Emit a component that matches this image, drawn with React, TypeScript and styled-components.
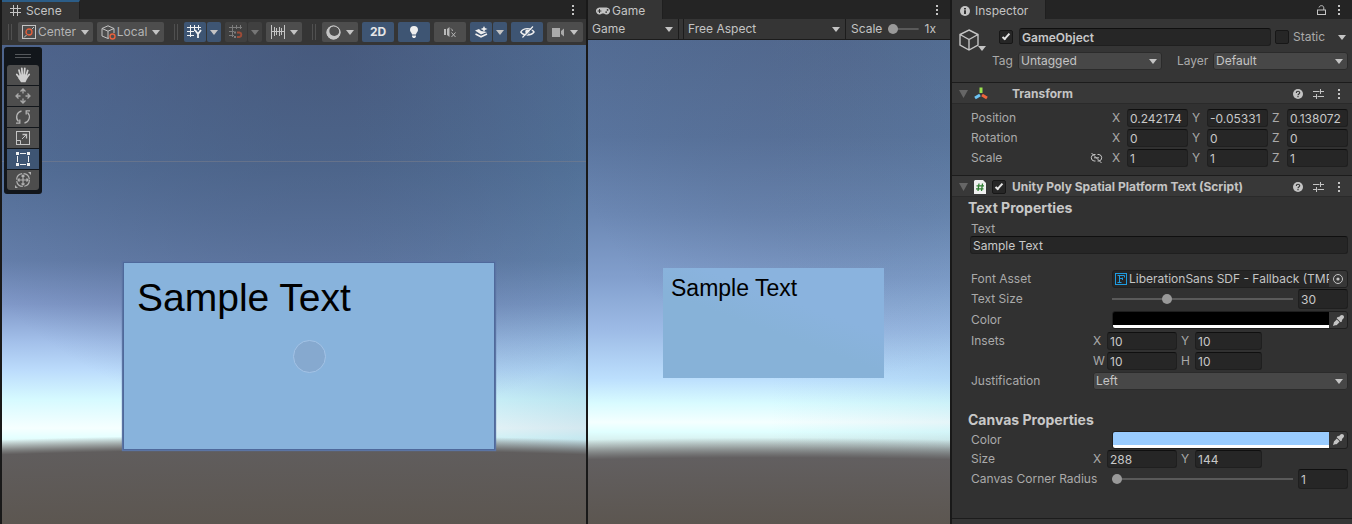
import React, { useId } from "react";
import styled, { createGlobalStyle, css } from "styled-components";
import { FaEyeDropper, FaGamepad } from "react-icons/fa";

const c = {
  gutter: "#191919",
  strip: "#242424",
  panel: "#353535",
  body: "#313131",
  header: "#383838",
  line: "#1c1c1c",
  field: "#262626",
  button: "#4d4d4d",
  select: "#474747",
  active: "#3e5573",
  text: "#c4c4c4",
  label: "#aaaaaa",
  icon: "#c4c4c4",
  orange: "#e8603c",
};

const Global = createGlobalStyle`
  *, *::before, *::after { box-sizing: border-box; }
  body { margin: 0; background: ${c.gutter}; color: ${c.text}; font: 12px/16px Inter, "Liberation Sans", sans-serif; }
  button, input, select { font: inherit; color: inherit; margin: 0; }
  button { border: 0; padding: 0; background: none; }
  svg { display: block; flex: none; }
`;

/* ---------- shell ---------- */

const Editor = styled.main`
  display: grid;
  grid-template-columns: minmax(0, 584fr) minmax(0, 362fr) 400px;
  gap: 2px;
  padding-left: 2px;
  min-height: 100vh;
`;

const Panel = styled.section`
  display: flex;
  flex-direction: column;
  min-width: 0;
  background: ${c.panel};
`;

const TabStrip = styled.header`
  display: flex;
  align-items: stretch;
  height: 19px;
  background: ${c.strip};
`;

const Tab = styled.div<{ $focused?: boolean; $gap: number }>`
  display: flex;
  align-items: center;
  gap: ${(p) => p.$gap}px;
  padding: ${(p) => (p.$focused ? 0 : 2)}px 17px 0 8px;
  background: ${c.panel};
  border-top: ${(p) => (p.$focused ? `2px solid #2c5d87` : "0")};
  border-right: 1px solid #1f1f1f;
`;

const StripActions = styled.div`
  display: flex;
  align-items: center;
  gap: 8px;
  margin-left: auto;
  padding-right: 8px;
`;

const IconButton = styled.button`
  display: flex;
  align-items: center;
  justify-content: center;
`;

/* ---------- icons ---------- */

const Kebab = () => (
  <svg width="10" height="12" viewBox="0 0 10 12" fill={c.icon}>
    <rect x="4" y="1" width="2" height="2" />
    <rect x="4" y="5" width="2" height="2" />
    <rect x="4" y="9" width="2" height="2" />
  </svg>
);

const Caret = ({ color = c.icon }: { color?: string }) => (
  <svg width="8" height="5" viewBox="0 0 8 5" fill={color}>
    <path d="M0 0H8L4 5Z" />
  </svg>
);

const FoldCaret = () => (
  <svg width="9" height="8" viewBox="0 0 9 8" fill="#666666">
    <path d="M0 0H9L4.500 8Z" />
  </svg>
);

const SceneIcon = () => (
  <svg width="11" height="11" viewBox="0 0 11 11" stroke={c.icon} fill="none">
    <path d="M3.500 0V11M7.500 0V11M0 3.500H11M0 7.500H11" />
  </svg>
);

const InfoIcon = () => (
  <svg width="10" height="10" viewBox="0 0 10 10">
    <circle cx="5" cy="5" r="5" fill={c.icon} />
    <path d="M4 2h2v1.500H4zM4 4.200h2V8H4z" fill={c.panel} />
  </svg>
);

const LockIcon = () => (
  <svg width="9" height="10" viewBox="0 0 9 10" fill="none" stroke={c.icon}>
    <rect x="0.500" y="5" width="8" height="4.500" />
    <path d="M2 2.500C2.500 0 6.800 0 6.800 2.800V5" />
  </svg>
);

const PivotIcon = () => (
  <svg width="15" height="15" viewBox="0 0 15 15" fill="none" stroke={c.icon}>
    <rect x="0.500" y="0.500" width="13" height="13" />
    <path d="M2 12.500L4.500 10M9.500 4.500L12 2" />
    <circle cx="7" cy="7" r="3" stroke={c.orange} strokeWidth="1.300" />
  </svg>
);

const LocalIcon = () => (
  <svg width="15" height="15" viewBox="0 0 15 15" fill="none" stroke={c.icon}>
    <path d="M8 13L7 13.500L1 11V3.500L7 0.800L13 3.500V8M1 3.500L7 6.200L13 3.500M7 6.200V13" />
    <circle cx="11.500" cy="11.500" r="2.500" stroke={c.orange} strokeWidth="1.400" />
  </svg>
);

const GridAxisIcon = () => (
  <svg width="16" height="14" viewBox="0 0 16 14" fill="none" stroke="#f2f2f2">
    <path d="M3.500 0V12M7.500 0V6M11.500 0V5M0 2.500H14M0 6.500H7M0 10.500H7" />
    <path d="M8 5L11 9L14 5M11 9V13" strokeWidth="1.800" />
  </svg>
);

const SnapIcon = () => (
  <svg width="15" height="14" viewBox="0 0 15 14" fill="none" stroke="#7c7c7c">
    <path d="M3.500 0V12M7.500 0V4M11.500 0V4M0 2.500H13M0 6.500H5M0 10.500H5" />
    <path d="M8 7.500H10.500A2.300 2.300 0 0 1 10.500 12H8" stroke="#9c4c38" strokeWidth="2" />
    <path d="M6 6.500v2M6 11v2" strokeWidth="2" />
  </svg>
);

const RulerIcon = () => (
  <svg width="14" height="14" viewBox="0 0 14 14" fill="none" stroke={c.icon}>
    <path d="M0.500 0V14M13.500 0V14M3.500 2V11M5.500 3V10M8.500 2V11M10.500 3V10M1 6.500H13" />
  </svg>
);

const ShadingIcon = () => (
  <svg width="15" height="15" viewBox="0 0 15 15">
    <circle cx="7.500" cy="7.500" r="7" fill={c.icon} />
    <circle cx="8.300" cy="6" r="5" fill="#4d4d4d" />
    <circle cx="7.500" cy="7.500" r="6.500" fill="none" stroke={c.icon} />
  </svg>
);

const BulbIcon = () => (
  <svg width="10" height="12" viewBox="0 0 10 12" fill="#eeeeee">
    <path d="M5 0a4 4 0 0 1 4 4c0 2-1.800 2.800-2 4.500H3C2.800 6.800 1 6 1 4a4 4 0 0 1 4-4zM3 9.500h4v1L6 12H4l-1-1.500z" />
  </svg>
);

const MuteIcon = () => (
  <svg width="12" height="11" viewBox="0 0 12 11" fill="none" stroke="#b8b8b8">
    <path d="M0 2H2V8H0zM3 2L5.500 0V10L3 8z" fill="#b8b8b8" stroke="none" />
    <path d="M7.500 5.500L11.500 10M11.500 5.500L7.500 10M7 1.500A4 4 0 0 1 8.500 4" />
  </svg>
);

const LayersIcon = () => (
  <svg width="13" height="12" viewBox="0 0 13 12">
    <path d="M0 4.500L4 3L6 5L9 5.500L12 6L6 8.500Z" fill="#eee" />
    <path d="M0.500 8L6 10.800L12 8" fill="none" stroke="#eee" strokeWidth="1.600" />
    <path d="M9 0l1 2 2.500 1L10 4 9 6 8 4 5.500 3 8 2z" fill="#eee" />
  </svg>
);

const EyeOffIcon = () => (
  <svg width="15" height="12" viewBox="0 0 15 12" fill="none" stroke="#eee">
    <path d="M0.800 6C3.500 1.500 11 1.500 14 6C11 10 3.500 10 0.800 6Z" strokeWidth="1.400" />
    <circle cx="7.500" cy="5.800" r="2.300" fill="#eee" stroke="none" />
    <path d="M2.500 11.500L13 0.500" strokeWidth="1.300" />
    <path d="M3.700 12L14.200 1" stroke={c.active} strokeWidth="1" />
  </svg>
);

const CameraIcon = () => (
  <svg width="13" height="9" viewBox="0 0 13 9" fill="#aaa">
    <path d="M0 0H8V9H0zM9 3L12 0.500V8.500L9 6z" />
  </svg>
);

const HandIcon = () => (
  <svg width="16" height="16" viewBox="0 0 16 16" fill="none" stroke="#cfcfcf" strokeWidth="1.800" strokeLinecap="round">
    <path d="M5.600 9L4 3.200M7.300 8L6.800 1.500M9.200 8L9.800 1.500M11 9L12.700 3.500M5 11.500L1.800 7.500M11.500 11L14.200 7.500" />
    <path d="M4.600 7.500H12L12.500 11L10.500 15.200H6L3.500 11.500Z" fill="#cfcfcf" stroke="none" />
  </svg>
);

const MoveIcon = () => (
  <svg width="16" height="16" viewBox="0 0 16 16" fill="none" stroke="#a8a8a8" strokeWidth="1.300">
    <path d="M8 1.500V5.500M8 10.500V14.500M1.500 8H5.500M10.500 8H14.500M5.500 3.500L8 1L10.500 3.500M5.500 12.500L8 15L10.500 12.500M3.500 5.500L1 8L3.500 10.500M12.500 5.500L15 8L12.500 10.500" />
  </svg>
);

const RotateIcon = () => (
  <svg width="16" height="16" viewBox="0 0 16 16" fill="none" stroke="#b4b4b4" strokeWidth="1.300">
    <path d="M6.500 2A6.200 6.200 0 0 0 3.500 12.500M9.500 14A6.200 6.200 0 0 0 12.500 3.500" />
    <path d="M1 14.200H4.800V10.500M15 1.800H11.200V5.500" />
  </svg>
);

const ScaleIcon = () => (
  <svg width="14" height="14" viewBox="0 0 14 14" fill="none" stroke="#c4c4c4">
    <rect x="0.500" y="0.500" width="13" height="13" />
    <path d="M0.500 9.500H4.500V13.500M6 8L10 4" />
    <path d="M6.500 3.500H10.500V7.500" strokeWidth="1.300" />
  </svg>
);

const RectIcon = () => (
  <svg width="14" height="14" viewBox="0 0 14 14" stroke="#f0f0f0" fill="#f0f0f0">
    <path d="M4 1.500H10M4 12.500H10M1.500 4V10M12.500 4V10" />
    <path stroke="none" d="M0 0h3v3H0zM11 0h3v3h-3zM0 11h3v3H0zM11 11h3v3h-3z" />
  </svg>
);

const TransformToolIcon = () => (
  <svg width="16" height="16" viewBox="0 0 16 16" fill="none" stroke="#b0b0b0" strokeWidth="1.200">
    <circle cx="8" cy="8" r="6.400" strokeDasharray="8.500 1.500" />
    <path d="M8 3V13M3 8H13M6.500 4.500L8 3L9.500 4.500M6.500 11.500L8 13L9.500 11.500M4.500 6.500L3 8L4.500 9.500M11.500 6.500L13 8L11.500 9.500" />
    <path d="M13 0H16V3zM0 13V16H3z" fill="#b0b0b0" stroke="none" />
  </svg>
);

const CubeIcon = () => (
  <svg width="20" height="22" viewBox="0 0 20 22" fill="none" stroke={c.icon} strokeWidth="1.400">
    <path d="M10 1L19 5.500V16L10 21L1 16V5.500ZM1 5.500L10 10.500L19 5.500M10 10.500V21" />
  </svg>
);

const TransformIcon = () => (
  <svg width="14" height="13" viewBox="0 0 14 13" strokeWidth="3" strokeLinecap="butt">
    <path d="M7 0.500V6" stroke="#9be34f" />
    <path d="M6 8L1 11" stroke="#6cc3f4" />
    <path d="M8 8L13 11" stroke="#f0643c" />
  </svg>
);

const ScriptIcon = () => (
  <svg width="12" height="14" viewBox="0 0 12 14">
    <path d="M1 0H9L12 3V14H0V1Z" fill="#f0f0f0" />
    <path d="M5 3.500L4 11M8.500 3.500L7.500 11M2.500 5.800H10M2 8.800H9.500" stroke="#2f7d32" strokeWidth="1.300" />
  </svg>
);

const HelpIcon = () => (
  <svg width="10" height="10" viewBox="0 0 10 10">
    <circle cx="5" cy="5" r="5" fill={c.icon} />
    <path d="M3.300 4C3.300 1.700 6.700 1.700 6.700 3.800C6.700 5 5 4.900 5 6.200M5 7V8.300" fill="none" stroke={c.header} strokeWidth="1.200" />
  </svg>
);

const PresetIcon = () => (
  <svg width="11" height="10" viewBox="0 0 11 10" fill="none" stroke={c.icon}>
    <path d="M0 2.500H6.500M8 2.500H11M7.500 0V5M0 7.500H3M4.500 7.500H11M3.500 5V10" />
  </svg>
);

const LinkOffIcon = () => (
  <svg width="13" height="10" viewBox="0 0 13 10" fill="none" stroke={c.icon}>
    <path d="M5.500 1.500H4A3.300 3.300 0 0 0 4 8H5.500M7.500 1.500H9A3.300 3.300 0 0 1 9 8H7.500M4 4.800H9M1.500 0L11.500 10" />
  </svg>
);

const FontIcon = () => (
  <svg width="12" height="12" viewBox="0 0 12 12" fill="none" stroke="#1e9be0">
    <rect x="0.500" y="0.500" width="11" height="11" />
    <path d="M2.500 2.500H9.500V4.500M4.500 2.500V9.500M2.500 9.500H6.500M4.500 5.500H8M7.500 4.500V7" />
  </svg>
);

const PickerIcon = () => (
  <svg width="10" height="10" viewBox="0 0 10 10">
    <circle cx="5" cy="5" r="4.500" fill="none" stroke={c.icon} />
    <circle cx="5" cy="5" r="1.600" fill={c.icon} />
  </svg>
);

/* ---------- scene panel ---------- */

const SceneToolbar = styled.div`
  display: flex;
  align-items: center;
  justify-content: space-between;
  height: 26px;
  padding: 0 3px 0 6px;
  overflow: hidden;
`;

const ToolGroup = styled.div`
  display: flex;
  align-items: center;
  gap: 4px;
`;

const Grip = styled.span`
  width: 4px;
  height: 16px;
  margin-right: 2px;
  border: solid #505050;
  border-width: 0 1px;
`;

const Split = styled.div`
  display: flex;
  gap: 1px;
`;

const ToolButton = styled.button<{ $w: number; $on?: boolean; $dim?: boolean }>`
  display: flex;
  align-items: center;
  justify-content: center;
  gap: 5px;
  width: ${(p) => p.$w}px;
  height: 20px;
  border-radius: 2px;
  background: ${(p) => (p.$on ? c.active : p.$dim ? "#404040" : c.button)};
  color: ${(p) => (p.$on ? "#e6e6e6" : "#b4b4b4")};
  font-weight: ${(p) => (p.$on ? 700 : 400)};
`;

const ButtonLabel = styled.span`
  margin-left: -4px;
`;

const View = styled.div<{ $kind: "scene" | "game" }>`
  position: relative;
  flex: 1;
  overflow: hidden;
  ${(p) =>
    p.$kind === "scene"
      ? css`
          background:
            radial-gradient(circle 8500px at 50% calc(84.500% + 8500px), #5c5650 calc(100% - 74px), #605d5d 100%, transparent calc(100% + 15px)),
            radial-gradient(75% 80% at 55% 0%, rgba(62, 78, 108, 0.500) 0%, rgba(70, 90, 126, 0.400) 50%, transparent 100%),
            linear-gradient(to right, transparent 60%, rgba(90, 150, 185, 0.220)),
            linear-gradient(#50668f 0%, #547099 25%, #6680ac 45%, #8098c8 54%, #a3c0ea 62%, #bcdcfc 68%, #d6faff 74%, #f6ffff 80%, #e4ffff 82%, #d8e8e6 84%, #a0a8a8 87%);
        `
      : css`
          background:
            radial-gradient(circle 8500px at 50% calc(86.300% + 8500px), #5c5650 calc(100% - 66px), #625f60 100%, transparent calc(100% + 20px)),
            radial-gradient(80% 70% at 70% 0%, rgba(78, 90, 120, 0.280) 0%, rgba(76, 96, 128, 0.180) 60%, transparent 100%),
            linear-gradient(to right, transparent 50%, rgba(100, 160, 190, 0.100)),
            linear-gradient(#536c94 0%, #5a759f 20%, #6c88b4 36%, #829fcd 49%, #9dbbe6 60%, #bcdffd 70%, #d8fbff 75%, #f4ffff 79%, #e0ffff 81%, #d0e4e2 84%, #a0a8a8 88%);
        `}
`;

const GridLine = styled.div`
  position: absolute;
  left: 0;
  right: 0;
  top: 116px;
  height: 1px;
  background: rgba(125, 128, 140, 0.500);
`;

const ToolPalette = styled.div`
  position: absolute;
  left: 2px;
  top: 2px;
  display: flex;
  flex-direction: column;
  gap: 1px;
  padding: 7px 3px 4px;
  border-radius: 3px;
  background: #12161b;

  button:nth-of-type(1) { border-radius: 3px 3px 0 0; }
  button:nth-of-type(6) { border-radius: 0 0 3px 3px; }
`;

const PaletteGrip = styled.span`
  align-self: center;
  width: 16px;
  height: 4px;
  margin-bottom: 6px;
  border: solid #55585c;
  border-width: 1px 0;
`;

const PaletteButton = styled(ToolButton)`
  border-radius: 0;
`;

const TextCard = styled.div<{ $kind: "scene" | "game" }>`
  position: absolute;
  color: #000;
  font-family: "Liberation Sans", Arial, sans-serif;
  ${(p) =>
    p.$kind === "scene"
      ? css`
          left: calc(50% - 170px);
          top: 218px;
          width: 370px;
          height: 186px;
          padding: 13px;
          background: #88b3dc;
          box-shadow: 0 0 0 1px #4f699b, 0 0 1px 2px #5b74a3;
          font-size: 39px;
          line-height: 44px;
        `
      : css`
          left: calc(50% - 106px);
          top: 228px;
          width: 221px;
          height: 110px;
          padding: 7px 8px;
          background: linear-gradient(20deg, #87b2d8 45%, #8ab3de 65%);
          font-size: 23px;
          line-height: 26px;
        `}
`;

const PivotHandle = styled.span`
  position: absolute;
  left: calc(50% - 16px);
  top: 77px;
  width: 33px;
  height: 33px;
  border: 1px solid #a3c3e6;
  border-radius: 50%;
  background: #86a9cf;
`;

/* ---------- game panel ---------- */

const GameToolbar = styled.div`
  display: grid;
  grid-template-columns: 90px 5px minmax(0, 1fr) 105px;
  height: 21px;
  border-bottom: 1px solid ${c.line};

  > * + * { border-left: 1px solid ${c.line}; }
`;

const ScaleControl = styled.label`
  display: flex;
  align-items: center;
  gap: 6px;
  padding: 0 14px 0 5px;
`;

/* ---------- form controls ---------- */

const SelectShell = styled.span<{ $flat?: boolean }>`
  display: grid;
  grid-template-columns: minmax(0, 1fr) 8px;
  align-items: center;
  min-width: 0;
  height: ${(p) => (p.$flat ? 20 : 18)}px;
  padding-right: 5px;
  border-radius: ${(p) => (p.$flat ? 0 : 3)}px;
  background: ${(p) => (p.$flat ? "none" : c.select)};
  box-shadow: ${(p) => (p.$flat ? "none" : "inset 0 0 0 1px #2b2b2b")};
  color: ${c.text};

  select {
    grid-area: 1 / 1 / 2 / 3;
    width: 100%;
    height: 100%;
    padding: 0 0 0 ${(p) => (p.$flat ? 4 : 3)}px;
    border: 0;
    background: none;
    appearance: none;
  }
  svg { grid-area: 1 / 2; pointer-events: none; }
`;

const Dropdown = ({ value, label, id, flat }: { value: string; label?: string; id?: string; flat?: boolean }) => (
  <SelectShell $flat={flat}>
    <select id={id} aria-label={label} defaultValue={value}>
      <option>{value}</option>
    </select>
    <Caret />
  </SelectShell>
);

const Field = styled.input<{ $tall?: boolean; $strong?: boolean }>`
  width: 100%;
  min-width: 0;
  height: ${(p) => (p.$tall ? 20 : 18)}px;
  padding: 0 2px;
  border: 1px solid #1f1f1f;
  border-top-color: #0f0f0f;
  border-radius: 3px;
  background: ${c.field};
  color: #c8c8c8;
  font-weight: ${(p) => (p.$strong ? 600 : 400)};
`;

const Slider = styled.input`
  flex: 1;
  min-width: 0;
  height: 10px;
  appearance: none;
  background: linear-gradient(#5a5a5a, #5a5a5a) center / 100% 2px no-repeat;

  &::-webkit-slider-thumb {
    appearance: none;
    width: 10px;
    height: 10px;
    border-radius: 50%;
    background: #999999;
  }
`;

const Check = styled.input`
  display: grid;
  place-items: center;
  width: 14px;
  height: 14px;
  flex: none;
  appearance: none;
  border: 1px solid #171717;
  border-radius: 2px;
  background: ${c.field};

  &:checked::after {
    content: "";
    width: 8px;
    height: 4px;
    border: solid #e4e4e4;
    border-width: 0 0 2px 2px;
    transform: translateY(-1px) rotate(-48deg);
  }
`;

/* ---------- inspector ---------- */

const ObjectHeader = styled.div`
  display: grid;
  grid-template-columns: 32px minmax(0, 1fr);
  column-gap: 8px;
  height: 63px;
  padding: 9px 4px 0 7px;
`;

const ObjectIcon = styled.button`
  display: grid;
  grid-template-columns: 19px 8px;
  align-self: start;
  padding-top: 1px;

  svg + svg { align-self: end; }
`;

const ObjectRows = styled.div`
  display: grid;
  align-content: start;
  row-gap: 6px;
`;

const NameRow = styled.div`
  display: grid;
  grid-template-columns: 16px minmax(0, 1fr) 14px 41px 10px;
  column-gap: 4px;
  align-items: center;
  color: ${c.label};

  button { justify-content: flex-start; }
`;

const TagRow = styled.div`
  display: grid;
  grid-template-columns: 26px minmax(0, 144fr) 51px minmax(0, 135fr);
  align-items: center;
  margin-left: -7px;
  color: ${c.label};

  label:nth-of-type(2) { padding-left: 15px; }
`;

const ComponentBar = styled.header`
  display: flex;
  align-items: center;
  height: 22px;
  padding: 1px 8px 0 6px;
  border-top: 1px solid ${c.line};
  border-bottom: 1px solid #2a2a2a;
  background: ${c.header};
`;

const Fold = styled(IconButton)`
  width: 10px;
  margin-right: 6px;
`;

const BarIcons = styled.div`
  display: flex;
  align-items: center;
  gap: 6px;
  width: 38px;
`;

const BarTitle = styled.h2`
  flex: 1;
  margin: 0;
  font-size: 12px;
  line-height: 16px;
  font-weight: 700;
`;

const BarActions = styled.div`
  display: flex;
  align-items: center;
  gap: 10px;
`;

const Body = styled.div`
  display: flex;
  flex-direction: column;
  padding: 4px 4px 0 19px;
  background: ${c.body};
  color: ${c.label};
`;

const TransformBody = styled(Body)`
  height: 71px;
`;

const ScriptBody = styled(Body)`
  flex: 1;
  padding-top: 1px;
`;

const Row = styled.div<{ $col?: number; $h?: number }>`
  display: grid;
  grid-template-columns: ${(p) => p.$col ?? 141}px minmax(0, 1fr);
  align-items: center;
  height: ${(p) => p.$h ?? 20}px;
`;

const RowLabel = styled.label`
  display: flex;
  align-items: center;
  justify-content: space-between;
  padding-right: 9px;
`;

const Axes = styled.div<{ $cols: string }>`
  display: grid;
  grid-template-columns: ${(p) => p.$cols};
  column-gap: 4px;
`;

const AxisLabel = styled.label<{ $w: number }>`
  display: grid;
  grid-template-columns: ${(p) => p.$w}px minmax(0, 1fr);
  align-items: center;
`;

const Axis = ({ name, value, of, w = 15 }: { name: string; value: string; of: string; w?: number }) => (
  <AxisLabel $w={w}>
    {name}
    <Field aria-label={`${of} ${name}`} defaultValue={value} />
  </AxisLabel>
);

const SectionTitle = styled.h3`
  height: 20px;
  margin: 0 0 0 -3px;
  color: #c8c8c8;
  font-size: 14px;
  line-height: 20px;
  font-weight: 700;
`;

const Spacer = styled.div<{ $h: number }>`
  height: ${(p) => p.$h}px;
`;

const WideField = styled.div`
  margin: -4px 0 0 -1px;
  height: 18px;
`;

const Boxed = styled.div`
  display: grid;
  grid-template-columns: minmax(0, 1fr) 18px;
  height: 18px;
  border: 1px solid #1f1f1f;
  border-radius: 3px;
  background: ${c.field};
  overflow: hidden;
`;

const AssetName = styled.button`
  display: flex;
  align-items: center;
  gap: 2px;
  min-width: 0;
  padding-left: 2px;
  overflow: hidden;
  white-space: nowrap;
  color: ${c.text};
`;

const BoxAction = styled(IconButton)`
  background: #373737;
  color: ${c.icon};
`;

const Swatch = styled.input`
  width: 100%;
  height: 16px;
  padding: 0;
  border: 0;
  border-bottom: 3px solid #ffffff;
  background: none;
  appearance: none;

  &::-webkit-color-swatch-wrapper { padding: 0; }
  &::-webkit-color-swatch { border: 0; border-radius: 0; }
`;

const SliderRow = styled.div`
  display: flex;
  align-items: center;
  gap: 5px;
`;

const NumberCell = styled.span`
  width: 50px;
  height: 20px;
`;

const Footer = styled.footer`
  height: 6px;
  border-top: 1px solid ${c.line};
`;

const ComponentActions = () => (
  <BarActions>
    <IconButton aria-label="Help"><HelpIcon /></IconButton>
    <IconButton aria-label="Presets"><PresetIcon /></IconButton>
    <IconButton aria-label="Component menu"><Kebab /></IconButton>
  </BarActions>
);

const VectorRow = ({ name, values, unlink }: { name: string; values: [string, string, string]; unlink?: boolean }) => (
  <Row role="group" aria-label={name}>
    <RowLabel as="span">
      {name}
      {unlink && <IconButton aria-label="Constrain proportions"><LinkOffIcon /></IconButton>}
    </RowLabel>
    <Axes $cols="repeat(3, minmax(0, 1fr))">
      {["X", "Y", "Z"].map((axis, i) => (
        <Axis key={axis} name={axis} value={values[i]} of={name} />
      ))}
    </Axes>
  </Row>
);

const PairRow = ({ name, axes, values }: { name?: string; axes: [string, string]; values: [string, string] }) => (
  <Row $col={122}>
    <span>{name}</span>
    <Axes $cols="84px 81px">
      {axes.map((axis, i) => (
        <Axis key={axis} name={axis} value={values[i]} of={name ?? "Insets"} w={14} />
      ))}
    </Axes>
  </Row>
);

const ColorRow = ({ value, h }: { value: string; h?: number }) => {
  const id = useId();
  return (
    <Row $h={h}>
      <RowLabel htmlFor={id}>Color</RowLabel>
      <Boxed>
        <Swatch id={id} type="color" defaultValue={value} />
        <BoxAction aria-label="Pick color"><FaEyeDropper size={11} /></BoxAction>
      </Boxed>
    </Row>
  );
};

const RangeRow = ({ name, value }: { name: string; value: number }) => {
  const id = useId();
  return (
    <Row>
      <RowLabel htmlFor={id}>{name}</RowLabel>
      <SliderRow>
        <Slider id={id} type="range" min={1} max={100} defaultValue={value} />
        <NumberCell>
          <Field $tall aria-label={`${name} value`} defaultValue={value} />
        </NumberCell>
      </SliderRow>
    </Row>
  );
};

/* ---------- panels ---------- */

const ScenePanel = () => (
  <Panel aria-label="Scene">
    <TabStrip>
      <Tab $focused $gap={5}><SceneIcon />Scene</Tab>
      <StripActions><IconButton aria-label="Scene menu"><Kebab /></IconButton></StripActions>
    </TabStrip>
    <SceneToolbar>
      <ToolGroup>
        <Grip />
        <ToolButton $w={75}><PivotIcon /><ButtonLabel>Center</ButtonLabel><Caret /></ToolButton>
        <ToolButton $w={67}><LocalIcon /><ButtonLabel>Local</ButtonLabel><Caret /></ToolButton>
      </ToolGroup>
      <ToolGroup>
        <Grip />
        <Split>
          <ToolButton $w={22} $on aria-label="Grid"><GridAxisIcon /></ToolButton>
          <ToolButton $w={14} $on aria-label="Grid options"><Caret /></ToolButton>
        </Split>
        <Split>
          <ToolButton $w={22} $dim aria-label="Grid snapping"><SnapIcon /></ToolButton>
          <ToolButton $w={14} $dim aria-label="Snapping options"><Caret color="#767676" /></ToolButton>
        </Split>
        <ToolButton $w={36} aria-label="Snap increment"><RulerIcon /><Caret /></ToolButton>
      </ToolGroup>
      <ToolGroup>
        <Grip />
        <ToolButton $w={36} aria-label="Draw mode"><ShadingIcon /><Caret /></ToolButton>
        <ToolButton $w={32} $on>2D</ToolButton>
        <ToolButton $w={32} $on aria-label="Lighting"><BulbIcon /></ToolButton>
        <ToolButton $w={32} aria-label="Audio"><MuteIcon /></ToolButton>
        <Split>
          <ToolButton $w={22} $on aria-label="Effects"><LayersIcon /></ToolButton>
          <ToolButton $w={14} $on aria-label="Effect options"><Caret /></ToolButton>
        </Split>
        <ToolButton $w={32} $on aria-label="Visibility"><EyeOffIcon /></ToolButton>
        <ToolButton $w={36} aria-label="Camera"><CameraIcon /><Caret /></ToolButton>
      </ToolGroup>
    </SceneToolbar>
    <View $kind="scene">
      <GridLine />
      <ToolPalette>
        <PaletteGrip />
        <PaletteButton $w={32} aria-label="View"><HandIcon /></PaletteButton>
        <PaletteButton $w={32} aria-label="Move"><MoveIcon /></PaletteButton>
        <PaletteButton $w={32} aria-label="Rotate"><RotateIcon /></PaletteButton>
        <PaletteButton $w={32} aria-label="Scale"><ScaleIcon /></PaletteButton>
        <PaletteButton $w={32} $on aria-label="Rect"><RectIcon /></PaletteButton>
        <PaletteButton $w={32} aria-label="Transform"><TransformToolIcon /></PaletteButton>
      </ToolPalette>
      <TextCard $kind="scene">
        Sample Text
        <PivotHandle />
      </TextCard>
    </View>
  </Panel>
);

const GamePanel = () => (
  <Panel aria-label="Game">
    <TabStrip>
      <Tab $gap={2}><FaGamepad size={14} />Game</Tab>
      <StripActions><IconButton aria-label="Game menu"><Kebab /></IconButton></StripActions>
    </TabStrip>
    <GameToolbar>
      <Dropdown flat label="Display" value="Game" />
      <span />
      <Dropdown flat label="Aspect" value="Free Aspect" />
      <ScaleControl>
        Scale
        <Slider type="range" min={1} max={5} defaultValue={1} />
        1x
      </ScaleControl>
    </GameToolbar>
    <View $kind="game">
      <TextCard $kind="game">Sample Text</TextCard>
    </View>
  </Panel>
);

const InspectorPanel = () => (
  <Panel aria-label="Inspector">
    <TabStrip>
      <Tab $gap={5}><InfoIcon />Inspector</Tab>
      <StripActions>
        <IconButton aria-label="Lock"><LockIcon /></IconButton>
        <IconButton aria-label="Inspector menu"><Kebab /></IconButton>
      </StripActions>
    </TabStrip>
    <ObjectHeader>
      <ObjectIcon aria-label="Object icon"><CubeIcon /><Caret /></ObjectIcon>
      <ObjectRows>
        <NameRow>
          <Check type="checkbox" aria-label="Active" defaultChecked />
          <Field $strong aria-label="Name" defaultValue="GameObject" />
          <Check type="checkbox" id="static" />
          <label htmlFor="static">Static</label>
          <IconButton aria-label="Static options"><Caret /></IconButton>
        </NameRow>
        <TagRow>
          <label htmlFor="tag">Tag</label>
          <Dropdown id="tag" value="Untagged" />
          <label htmlFor="layer">Layer</label>
          <Dropdown id="layer" value="Default" />
        </TagRow>
      </ObjectRows>
    </ObjectHeader>

    <ComponentBar>
      <Fold aria-label="Toggle Transform"><FoldCaret /></Fold>
      <BarIcons><TransformIcon /></BarIcons>
      <BarTitle>Transform</BarTitle>
      <ComponentActions />
    </ComponentBar>
    <TransformBody>
      <VectorRow name="Position" values={["0.242174", "-0.05331", "0.138072"]} />
      <VectorRow name="Rotation" values={["0", "0", "0"]} />
      <VectorRow name="Scale" values={["1", "1", "1"]} unlink />
    </TransformBody>

    <ComponentBar>
      <Fold aria-label="Toggle script"><FoldCaret /></Fold>
      <BarIcons>
        <ScriptIcon />
        <Check type="checkbox" aria-label="Script enabled" defaultChecked />
      </BarIcons>
      <BarTitle>Unity Poly Spatial Platform Text (Script)</BarTitle>
      <ComponentActions />
    </ComponentBar>
    <ScriptBody>
      <SectionTitle>Text Properties</SectionTitle>
      <Row $h={22}>
        <RowLabel htmlFor="text">Text</RowLabel>
      </Row>
      <WideField><Field id="text" defaultValue="Sample Text" /></WideField>
      <Spacer $h={15} />
      <Row role="group" aria-label="Font Asset">
        <span>Font Asset</span>
        <Boxed>
          <AssetName><FontIcon />LiberationSans SDF - Fallback (TMP</AssetName>
          <BoxAction aria-label="Select asset"><PickerIcon /></BoxAction>
        </Boxed>
      </Row>
      <RangeRow name="Text Size" value={30} />
      <ColorRow value="#000000" h={22} />
      <PairRow name="Insets" axes={["X", "Y"]} values={["10", "10"]} />
      <PairRow axes={["W", "H"]} values={["10", "10"]} />
      <Row $col={122}>
        <RowLabel htmlFor="just">Justification</RowLabel>
        <Dropdown id="just" value="Left" />
      </Row>
      <Spacer $h={19} />
      <SectionTitle>Canvas Properties</SectionTitle>
      <ColorRow value="#99ccff" h={19} />
      <PairRow name="Size" axes={["X", "Y"]} values={["288", "144"]} />
      <RangeRow name="Canvas Corner Radius" value={1} />
    </ScriptBody>
    <Footer />
  </Panel>
);

export default function App() {
  return (
    <>
      <Global />
      <Editor>
        <ScenePanel />
        <GamePanel />
        <InspectorPanel />
      </Editor>
    </>
  );
}
